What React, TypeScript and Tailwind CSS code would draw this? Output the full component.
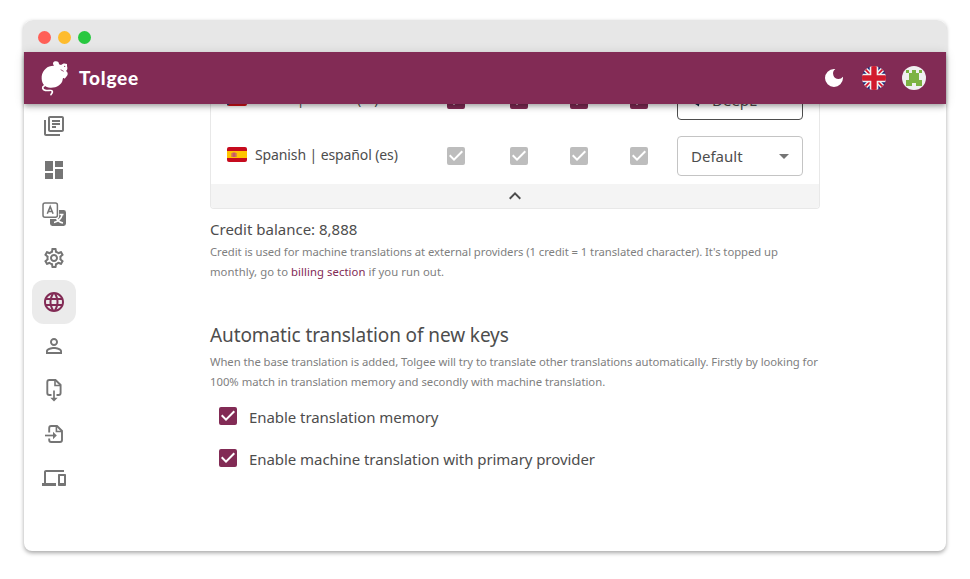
import type { ReactNode } from "react";
import {
  MdArrowDropDown,
  MdCheckBox,
  MdDarkMode,
  MdDashboard,
  MdKeyboardArrowUp,
  MdLanguage,
  MdOutlineDevices,
  MdOutlineLibraryBooks,
  MdOutlinePersonOutline,
  MdOutlineSettings,
} from "react-icons/md";

function MouseLogo() {
  return (
    <svg className="h-9 w-7" viewBox="78 150 84 108" fill="#fff">
      <path d="M80 206C79 187 92 170 109 168L117 167C111 160 115 154 123 154C129 154 132 158 132 163L138 165C143 160 149 159 156 162L156 168C158 174 158 180 153 183C159 186 160 194 155 199L149 206C146 202 143 204 143 209C141 223 124 234 106 233C91 232 81 223 80 206Z" />
      <circle cx="149" cy="169" r="2" fill="#822b55" />
      <path d="M137 179L146 184" stroke="#822b55" strokeWidth="2.4" />
      <path
        d="M88 227C80 231 82 239 91 241C101 243 111 237 112 244C113 249 109 250 108 254"
        fill="none"
        stroke="#fff"
        strokeWidth="5"
        strokeLinecap="round"
      />
      <path d="M90 234C98 239 106 236 112 237" fill="none" stroke="#822b55" strokeWidth="2" />
    </svg>
  );
}

function UkFlag() {
  return (
    <svg className="size-6 rounded-full" viewBox="0 0 24 24">
      <path fill="#1b2a7a" d="M0 0h24v24H0z" />
      <path d="M0 0l24 24M24 0L0 24" stroke="#f0f0f0" strokeWidth="4.600" />
      <path d="M0 0l24 24M24 0L0 24" stroke="#d80f27" strokeWidth="1.600" />
      <path d="M12 0v24M0 12h24" stroke="#f0f0f0" strokeWidth="8.600" />
      <path d="M12 0v24M0 12h24" stroke="#d11a2d" strokeWidth="5.400" />
    </svg>
  );
}

function Avatar() {
  return (
    <svg className="size-6 rounded-full" viewBox="0 0 24 24">
      <path fill="#f0f0f0" d="M0 0h24v24H0z" />
      <path
        fill="#7cb342"
        shapeRendering="crispEdges"
        d="M4 4h3v3H4zM10 4h4v3h3v7h3v6h-6v-3h-4v3H4v-6h3V7h3zM17 4h3v3h-3z"
      />
    </svg>
  );
}

function TranslateIcon() {
  return (
    <svg className="size-6" viewBox="0 0 24 24" fill="none" stroke="currentColor">
      <path
        fill="currentColor"
        stroke="none"
        d="M17 8h4.600A2.400 2.400 0 0 1 24 10.400V21.600A2.400 2.400 0 0 1 21.600 24H10.400A2.400 2.400 0 0 1 8 21.600V17H14.500A2.500 2.500 0 0 0 17 14.500z"
      />
      <rect x="1" y="0.900" width="14.400" height="14.400" rx="2" strokeWidth="1.500" />
      <path d="M5.300 11.800L8.200 4.600L11.100 11.800M6.300 9.500H10.100" strokeWidth="1.500" />
      <path
        d="M17.500 12.500H21.500M20.300 12.500C19.500 16 16 20 12 20.500M14.500 16.500C16 19 18 20.500 21 21"
        stroke="#fff"
        strokeWidth="1.500"
      />
    </svg>
  );
}

function ExportIcon() {
  return (
    <svg className="size-6" viewBox="0 0 24 24" fill="none" stroke="currentColor" strokeWidth="1.900">
      <path d="M9.500 17H7.300A2 2 0 0 1 5.300 15V4A2 2 0 0 1 7.300 2H13.500L18.600 7V15A2 2 0 0 1 16.600 17H14.500" />
      <path d="M13 2V7.500H18.500" strokeWidth="1.600" />
      <path d="M12 12.500V20.500" strokeWidth="1.700" />
      <path d="M8.300 19.700H15.700L12 23.400z" fill="currentColor" stroke="none" />
    </svg>
  );
}

function ImportIcon() {
  return (
    <svg className="size-6" viewBox="0 0 24 24" fill="none" stroke="currentColor" strokeWidth="1.900">
      <path d="M7.200 10.500V6A2 2 0 0 1 9.200 4H15L20 9V18A2 2 0 0 1 18 20H9.200A2 2 0 0 1 7.200 18V16.500" />
      <path d="M14.400 4V9.500H20" strokeWidth="1.600" />
      <path d="M3 13.500H12" strokeWidth="1.700" />
      <path d="M11 9.800V17.200L14.800 13.500z" fill="currentColor" stroke="none" />
    </svg>
  );
}

function SpanishFlag() {
  return (
    <svg className="h-[15px] w-5 rounded-[2px]" viewBox="0 0 20 15">
      <path fill="#c60b1e" d="M0 0h20v15H0z" />
      <path fill="#ffc400" d="M0 4h20v7H0z" />
      <path fill="#dc8c3c" d="M4 6h6v4H4z" />
      <path fill="#c9566a" d="M5.500 5.500h3V10h-3z" />
    </svg>
  );
}

function CzechFlag() {
  return (
    <svg className="h-[15px] w-5 rounded-[2px]" viewBox="0 0 20 15">
      <path fill="#fff" d="M0 0h20v8H0z" />
      <path fill="#d7141a" d="M0 7.500h20V15H0z" />
      <path fill="#11457e" d="M0 0l10 7.500L0 15z" />
    </svg>
  );
}

type RowProps = {
  flag: ReactNode;
  name: string;
  color: string;
  border: string;
  children: ReactNode;
};

function LanguageRow({ flag, name, color, border, children }: RowProps) {
  return (
    <div className="flex h-14 shrink-0 items-center pl-4">
      <div className="flex w-[217px] items-center gap-2 pb-[3px]">
        {flag}
        <span className="whitespace-nowrap pt-px text-[14px] leading-5 tracking-[-0.11px]">{name}</span>
      </div>
      <div className={"flex " + color}>
        <MdCheckBox className="mr-[39px] size-6" />
        <MdCheckBox className="mr-9 size-6" />
        <MdCheckBox className="mr-9 size-6" />
        <MdCheckBox className="mr-[26px] size-6" />
      </div>
      <div className={"flex h-10 w-[126px] items-center rounded border pl-[13px] pr-1.5 text-[15px] " + border}>
        {children}
        <MdArrowDropDown className="ml-auto size-6 text-[#757575]" />
      </div>
    </div>
  );
}

function SideItem({ active, children }: { active?: boolean; children: ReactNode }) {
  return (
    <div
      className={
        active
          ? "flex size-11 items-center justify-center rounded-xl bg-[#ebebeb] text-[#822b55]"
          : "flex size-11 items-center justify-center text-[#757575]"
      }
    >
      {children}
    </div>
  );
}

function Option({ label }: { label: string }) {
  return (
    <div className="flex h-[42px] items-center">
      <MdCheckBox className="mb-[3px] ml-1.5 size-6 text-[#822b55]" />
      <span className="ml-[9px] whitespace-nowrap text-[15px] tracking-[-0.06px]">{label}</span>
    </div>
  );
}

export default function App() {
  return (
    <div className="h-[579px] w-[970px] bg-white px-6 pt-5 font-['Noto_Sans',sans-serif] text-[#4d4d4d]">
      <div className="flex h-[531px] w-[922px] flex-col rounded-[8px] bg-white shadow-[0_2px_4px_rgba(0,0,0,0.35)]">
        <div className="-mx-px flex h-8 shrink-0 items-center gap-[7px] rounded-t-[10px] bg-[#e7e7e7] pl-[14.5px] pt-0.5">
          <i className="size-[13px] rounded-full bg-[#ff5f57]" />
          <i className="size-[13px] rounded-full bg-[#febc2e]" />
          <i className="size-[13px] rounded-full bg-[#28c840]" />
        </div>
        <header className="relative z-10 flex h-[52px] shrink-0 items-center bg-[#822b55] pl-[17px] pr-5 text-white shadow-[0_2px_4px_-1px_rgba(0,0,0,0.2),0_4px_5px_rgba(0,0,0,0.14),0_1px_10px_rgba(0,0,0,0.12)]">
          <MouseLogo />
          <span className="ml-[10px] font-['Lato',sans-serif] text-[19px] font-black leading-6 tracking-[0.8px]">Tolgee</span>
          <div className="ml-auto flex items-center gap-4">
            <MdDarkMode className="size-6" />
            <UkFlag />
            <Avatar />
          </div>
        </header>
        <div className="flex h-[447px] overflow-hidden rounded-b-[6px]">
          <nav className="flex w-[186px] shrink-0 flex-col pl-2">
            <SideItem><MdOutlineLibraryBooks className="size-6" /></SideItem>
            <SideItem><MdDashboard className="size-6" /></SideItem>
            <SideItem><TranslateIcon /></SideItem>
            <SideItem><MdOutlineSettings className="size-6" /></SideItem>
            <SideItem active><MdLanguage className="size-6" /></SideItem>
            <SideItem><MdOutlinePersonOutline className="size-6" /></SideItem>
            <SideItem><ExportIcon /></SideItem>
            <SideItem><ImportIcon /></SideItem>
            <SideItem><MdOutlineDevices className="size-6" /></SideItem>
          </nav>
          <main className="-mt-8 w-[610px] shrink-0">
            <div className="flex h-[137px] flex-col overflow-hidden rounded-b border border-t-0 border-[#e8e8e8]">
              <LanguageRow flag={<CzechFlag />} name="Czech | čeština (cs)" color="text-[#822b55]" border="border-[#4d4d4d]">
                <svg className="mr-[5px] size-4" viewBox="0 0 16 16">
                  <path fill="#0f2b46" d="M7 0l6 3.500v6.500L8 12.500V14.500L1 10V3.500z" />
                </svg>
                DeepL
              </LanguageRow>
              <LanguageRow flag={<SpanishFlag />} name="Spanish | español (es)" color="text-[#bdbdbd]" border="border-[#c4c4c4]">
                <span>Default</span>
              </LanguageRow>
              <div className="flex h-6 shrink-0 items-center justify-center bg-[#f4f4f4]">
                <MdKeyboardArrowUp className="size-6" />
              </div>
            </div>
            <p className="mt-2 text-[15px] leading-6">Credit balance: 8,888</p>
            <p className="mt-px whitespace-nowrap text-[11.3px] leading-5 text-[#808080]">
              <span className="tracking-[-0.06px]">Credit is used for machine translations at external providers (1 credit = 1 translated character). It's topped up</span>
              <br />
              <span className="tracking-[0.06px]">monthly, go to <a className="text-[#822b55]">billing section</a> if you run out.</span>
            </p>
            <h2 className="mt-[37px] text-[19px] leading-8 tracking-[-0.1px]">Automatic translation of new keys</h2>
            <p className="mb-1 mt-px whitespace-nowrap text-[11.3px] leading-5 text-[#808080]">
              <span className="tracking-[-0.06px]">When the base translation is added, Tolgee will try to translate other translations automatically. Firstly by looking for</span>
              <br />
              <span className="tracking-[-0.015px]">100% match in translation memory and secondly with machine translation.</span>
            </p>
            <Option label="Enable translation memory" />
            <Option label="Enable machine translation with primary provider" />
          </main>
        </div>
      </div>
    </div>
  );
}
